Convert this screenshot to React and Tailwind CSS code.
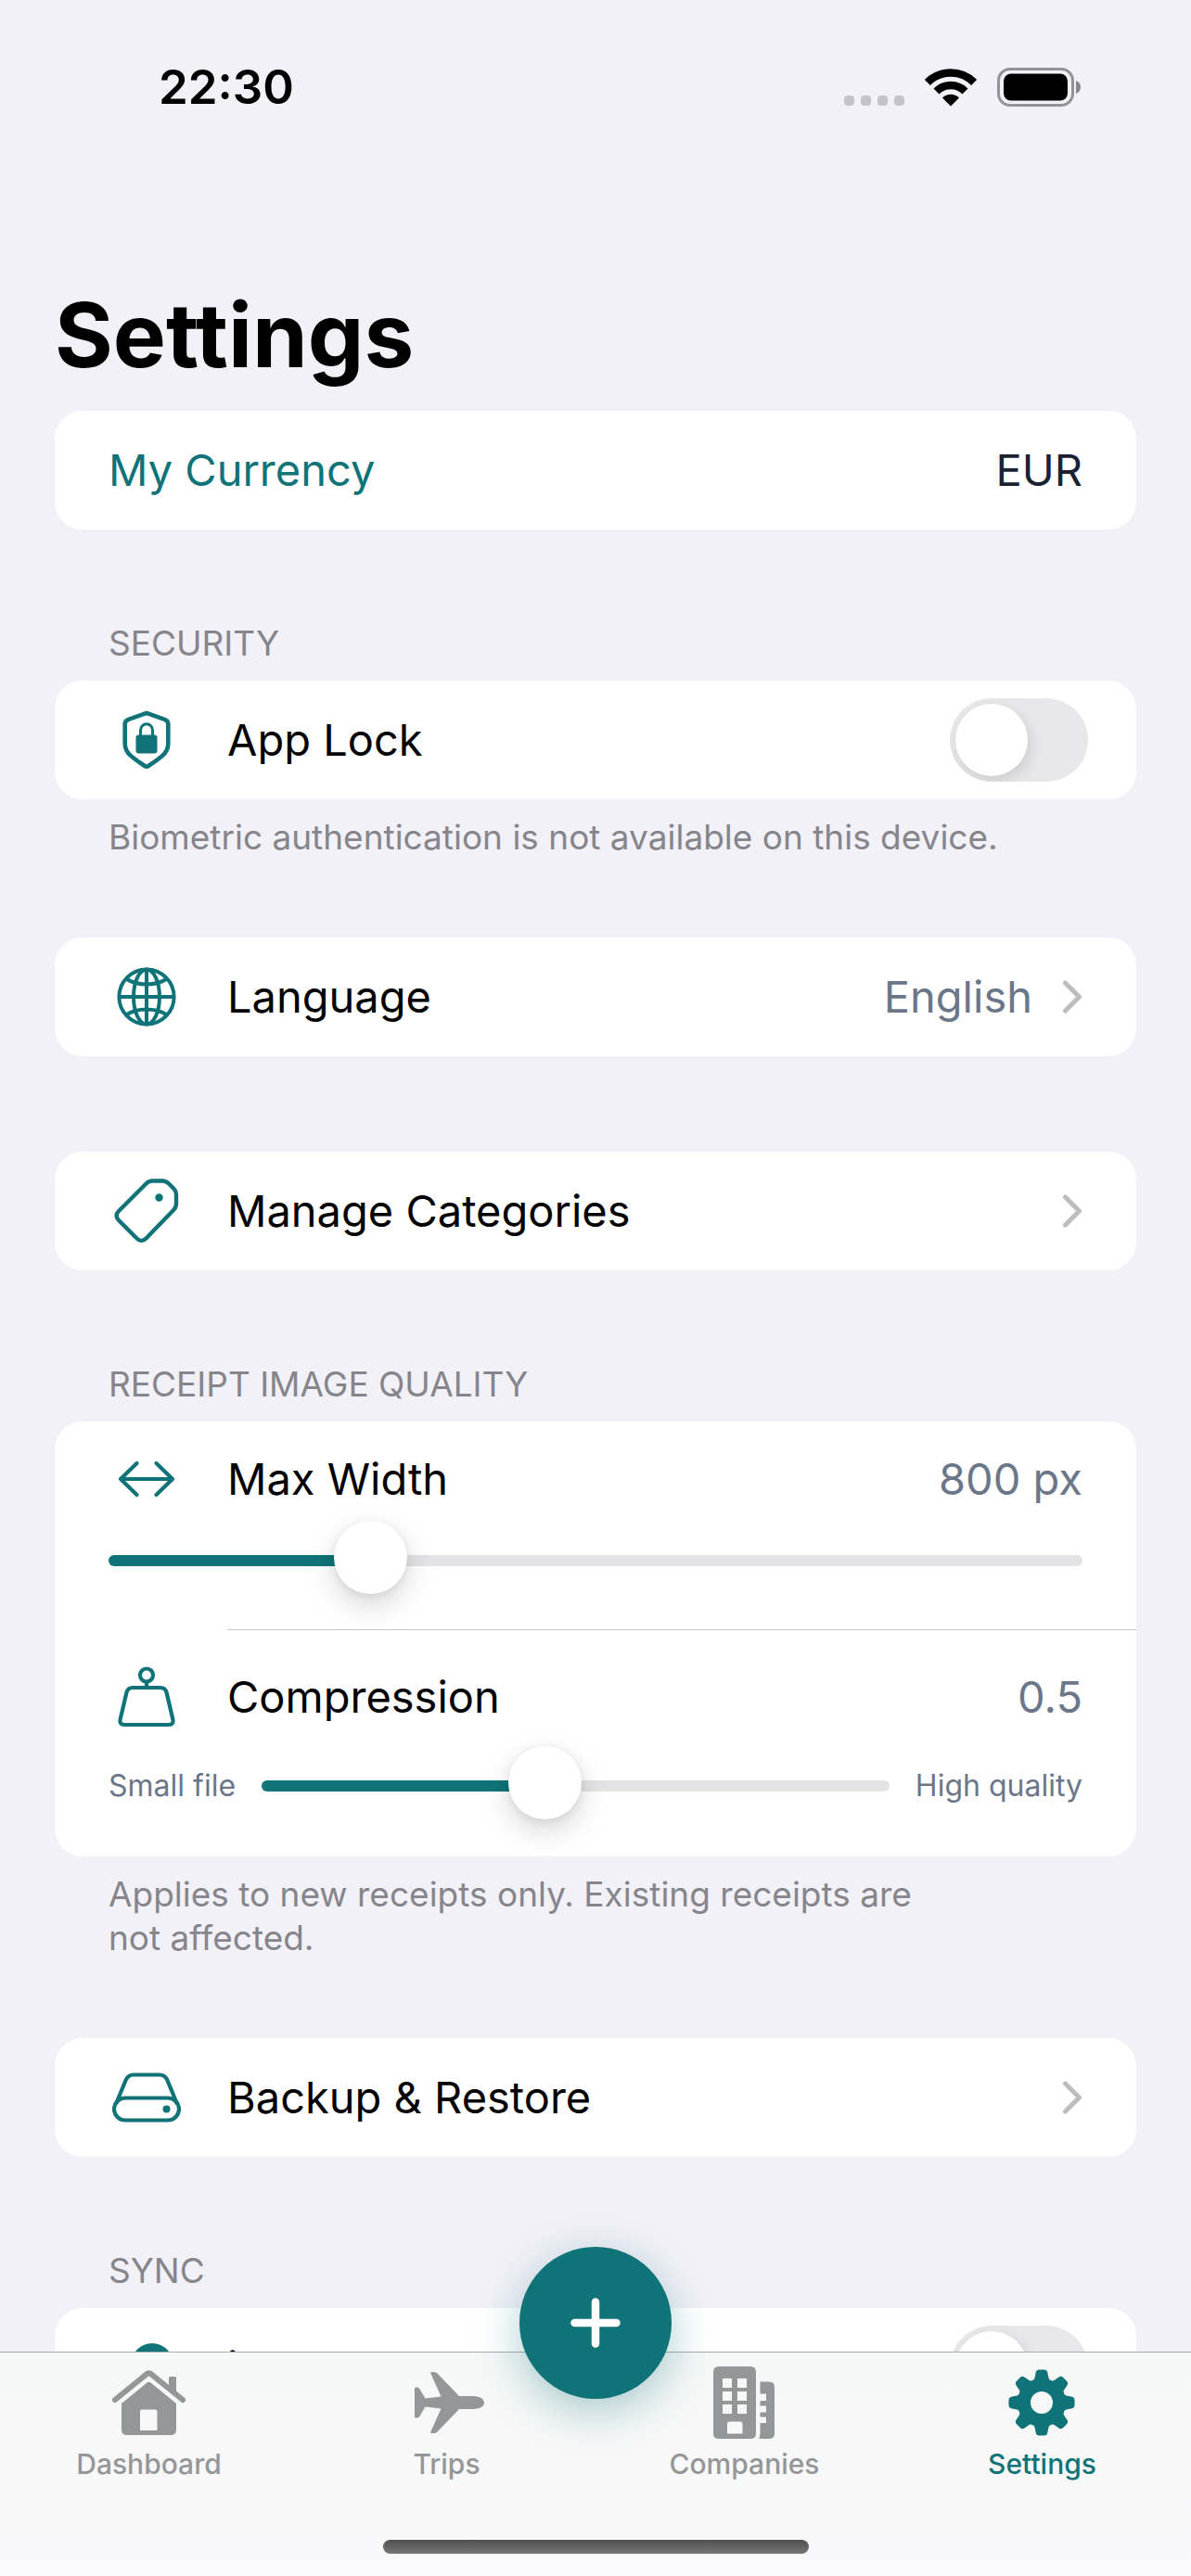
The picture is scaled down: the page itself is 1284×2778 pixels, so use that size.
import React, { useState } from "react";

const ShieldLockIcon = () => (
  <svg width="52" height="64" viewBox="0 0 52 64" fill="none">
    <path
      d="M24 3.6 Q26 2.6 28 3.6 L45.5 9.8 Q49.3 11.2 49.3 15 V36 Q49.3 44 42.5 49.5 Q36.5 54.5 28 60 Q26 61.3 24 60 Q15.5 54.5 9.5 49.5 Q2.7 44 2.7 36 V15 Q2.7 11.2 6.5 9.8 Z"
      stroke="currentColor"
      strokeWidth="4.6"
      strokeLinejoin="round"
    />
    <rect x="14.5" y="26.5" width="23" height="20" rx="3" fill="currentColor" />
    <path d="M19.5 28 V21.5 A6.5 6.8 0 0 1 32.5 21.5 V28" stroke="currentColor" strokeWidth="3" />
  </svg>
);

const GlobeIcon = () => (
  <svg width="64" height="64" viewBox="0 0 64 64" fill="none" stroke="currentColor" strokeWidth="4">
    <circle cx="32" cy="32" r="29.6" />
    <ellipse cx="32" cy="32" rx="14" ry="29.6" />
    <path d="M32 2 V62 M2 32 H62 M10 12.5 Q19 18.5 32 18.5 T54 12.5 M10 51.5 Q19 45.5 32 45.5 T54 51.5" />
  </svg>
);

const TagIcon = () => (
  <svg width="70" height="70" viewBox="0 0 70 70" fill="none">
    <path
      d="M41 2.5 H52 Q56 2.5 59 5.5 L64 10.5 Q67 13.5 67 17.5 V27 Q67 31 64 34 L34.5 64.5 Q29.5 69.5 24.5 64.5 L5 45 Q0 40 5 35 L34.5 5.5 Q37.5 2.5 41 2.5 Z"
      stroke="currentColor"
      strokeWidth="4.4"
      strokeLinejoin="round"
    />
    <circle cx="48.5" cy="20.5" r="4.2" fill="currentColor" />
  </svg>
);

const ArrowsIcon = () => (
  <svg width="62" height="40" viewBox="0 0 62 40" fill="none" stroke="currentColor" strokeWidth="4.2" strokeLinecap="round" strokeLinejoin="round">
    <path d="M3 20 H59 M20.5 3 L3 20 L20.5 37 M41.5 3 L59 20 L41.5 37" />
  </svg>
);

const WeightIcon = () => (
  <svg width="62" height="66" viewBox="0 0 62 66" fill="none" stroke="currentColor" strokeWidth="4.2">
    <circle cx="31" cy="9.5" r="7" />
    <path d="M31 16.5 V23" />
    <path d="M16 23 H46 Q51 23 52.5 28 L59.3 57 Q60.5 63 55 63 H7 Q1.5 63 2.7 57 L9.5 28 Q11 23 16 23 Z" strokeLinejoin="round" />
  </svg>
);

const DriveIcon = () => (
  <svg width="74" height="54" viewBox="0 0 74 54" fill="none">
    <path d="M14 27.5 H60 A11.8 11.8 0 0 1 60 51.5 H14 A11.8 11.8 0 0 1 14 27.5 Z" stroke="currentColor" strokeWidth="4.2" />
    <path d="M4 34 L14.5 8.5 Q17 2.5 23 2.5 H51 Q57 2.5 59.5 8.5 L70 34" stroke="currentColor" strokeWidth="4.2" />
    <circle cx="58.5" cy="39.5" r="4" fill="currentColor" />
  </svg>
);

const CloudIcon = () => (
  <svg width="78" height="52" viewBox="0 0 78 52" fill="currentColor">
    <circle cx="45" cy="22.5" r="22.5" />
    <circle cx="16" cy="36" r="16" />
    <circle cx="62" cy="36" r="16" />
    <rect x="16" y="28" width="46" height="24" />
  </svg>
);

const ChevronIcon = () => (
  <svg width="22" height="36" viewBox="0 0 22 36" fill="none" className="text-[#bdbdbf]">
    <path d="M3.5 3 L18.5 18 L3.5 33" stroke="currentColor" strokeWidth="5" strokeLinecap="round" strokeLinejoin="round" />
  </svg>
);

const WifiIcon = () => (
  <svg width="56" height="41" viewBox="0 0 56 41" fill="none" stroke="#000">
    <path d="M2.9 14.9 A35.5 35.5 0 0 1 53.1 14.9" strokeWidth="8.5" />
    <path d="M12.5 24.5 A22 22 0 0 1 43.5 24.5" strokeWidth="8.5" />
    <path d="M28 40.5 L19 31.5 A12.7 12.7 0 0 1 37 31.5 Z" fill="#000" stroke="none" />
  </svg>
);

const BatteryIcon = () => (
  <svg width="92" height="42" viewBox="0 0 92 42" fill="none">
    <rect x="1.5" y="1.5" width="80" height="39" rx="12.5" stroke="#949398" strokeWidth="3" />
    <rect x="7" y="6.5" width="69" height="29" rx="8" fill="#000" />
    <path d="M85 14 Q90 16 90 21 Q90 26 85 28 Z" fill="#87868b" />
  </svg>
);

const HouseIcon = () => (
  <svg width="80" height="78" viewBox="0 -4 80 78" fill="currentColor">
    <path d="M61 8.5 Q61 7 62.5 7 H67.5 Q69 7 69 8.5 V28 L61 21 Z" />
    <path d="M3 32 L37.5 3.9 Q39.5 2.5 41.5 3.9 L76 32" fill="none" stroke="currentColor" strokeWidth="6" strokeLinecap="round" />
    <path
      fillRule="evenodd"
      d="M10 36 L37.5 13.5 Q39.5 12 41.5 13.5 L69 36 V64 Q69 70 63 70 H16 Q10 70 10 64 Z M32 42.5 Q30 42.5 30 44.5 V65 H48.5 V44.5 Q48.5 42.5 46.5 42.5 Z"
    />
  </svg>
);

const PlaneIcon = () => (
  <svg width="82" height="78" viewBox="-6 -6 82 78" fill="currentColor">
    <path d="M48 26 L64 26 Q75 27 75 33 Q75 39 64 40 L48 40 L24.5 64.5 Q23 66 21 66 H18.5 Q16.5 66 17.5 64 L28.5 39.5 L11.5 37.5 L5.5 47.5 Q4.5 49.5 2.5 49.5 H1.5 Q0 49.5 0 48 V18 Q0 16.5 1.5 16.5 H2.5 Q4.5 16.5 5.5 18.5 L11.5 28.5 L28.5 26.5 L17.5 2 Q16.5 0 18.5 0 H21 Q23 0 24.5 1.5 Z" />
  </svg>
);

const BuildingsIcon = () => (
  <svg width="68" height="78" viewBox="0 0 68 78" fill="currentColor">
    <path
      fillRule="evenodd"
      d="M6 0 H40 Q46 0 46 6 V72 Q46 78 40 78 H6 Q0 78 0 72 V6 Q0 0 6 0 Z M10 13 H20 V23 H10 Z M26 13 H36 V23 H26 Z M10 27 H20 V37 H10 Z M26 27 H36 V37 H26 Z M10 41 H20 V51 H10 Z M26 41 H36 V51 H26 Z M17.5 59.5 Q15 59.5 15 62 V72.5 H31.5 V62 Q31.5 59.5 29 59.5 Z"
    />
    <path d="M50.5 16.5 H60 Q66 16.5 66 22.5 V72 Q66 78 60 78 H49 Q50.5 76 50.5 72 V61 H57 V54.5 H50.5 V49.5 H57 V42.5 H50.5 V37 H57 V29.5 H50.5 Z" />
  </svg>
);

const GearIcon = () => (
  <svg width="74" height="78" viewBox="0 -3 74 78" fill="currentColor">
    <circle cx="36" cy="36" r="19" fill="none" stroke="currentColor" strokeWidth="14" />
    {[0, 45, 90, 135, 180, 225, 270, 315].map((angle) => (
      <path
        key={angle}
        d="M25 13 Q28 12 28.5 9.5 L29.8 3 Q30.5 0.5 33 0.5 H39 Q41.5 0.5 42.2 3 L43.5 9.5 Q44 12 47 13 Z"
        transform={`rotate(${angle} 36 36)`}
      />
    ))}
  </svg>
);

const tabs = [
  { label: "Dashboard", icon: <HouseIcon /> },
  { label: "Trips", icon: <PlaneIcon /> },
  { label: "Companies", icon: <BuildingsIcon /> },
  { label: "Settings", icon: <GearIcon />, active: true },
];

const Section = ({ title, footer, children }) => (
  <section>
    {title && <h2 className="mb-[17px] px-[58px] text-[37px] leading-[47px] text-[#85858b]">{title}</h2>}
    <div className="rounded-[30px] bg-white">{children}</div>
    {footer && <p className="mt-[17px] px-[58px] text-[37px] leading-[47px] text-[#85858b]">{footer}</p>}
  </section>
);

const RowIcon = ({ children }) => (
  <span className="flex w-[81px] shrink-0 justify-center text-[#0f7377]">{children}</span>
);

const LinkRow = ({ icon, label, value }) => (
  <button type="button" className="flex h-32 w-full items-center gap-[47px] px-[58px] text-left">
    <RowIcon>{icon}</RowIcon>
    <span className="flex-1">{label}</span>
    <span className="flex items-center gap-8 text-[#6b7789]">
      {value}
      <ChevronIcon />
    </span>
  </button>
);

const ToggleRow = ({ icon, label }) => {
  const [on, setOn] = useState(false);

  return (
    <label className="flex h-32 items-center gap-[47px] pr-[52px] pl-[58px]">
      <RowIcon>{icon}</RowIcon>
      <span className="flex-1">{label}</span>
      <input
        type="checkbox"
        role="switch"
        checked={on}
        onChange={(e) => setOn(e.target.checked)}
        className="h-[90px] w-[149px] appearance-none overflow-hidden rounded-full bg-[#e8e8ea] p-[6px] before:block before:size-[78px] before:rounded-full before:bg-white before:shadow-[3px_6px_16px_rgba(0,0,0,0.12)] checked:bg-[#0f7377] checked:before:ml-auto"
      />
    </label>
  );
};

const Slider = ({ label, value, min, max, step, onChange }) => {
  const fill = ((value - min) / (max - min)) * 100;

  return (
    <input
      type="range"
      aria-label={label}
      value={value}
      min={min}
      max={max}
      step={step}
      onChange={(e) => onChange(Number(e.target.value))}
      style={{ "--track": `linear-gradient(to right, #0f7377 ${fill}%, #e3e3e5 ${fill}%)` }}
      className="h-[84px] min-w-0 flex-1 appearance-none bg-transparent [&::-webkit-slider-runnable-track]:h-3 [&::-webkit-slider-runnable-track]:rounded-full [&::-webkit-slider-runnable-track]:[background:var(--track)] [&::-webkit-slider-thumb]:-mt-[37px] [&::-webkit-slider-thumb]:size-[79px] [&::-webkit-slider-thumb]:appearance-none [&::-webkit-slider-thumb]:rounded-full [&::-webkit-slider-thumb]:bg-white [&::-webkit-slider-thumb]:shadow-[0_12px_32px_rgba(0,0,0,0.16),0_2px_10px_rgba(0,0,0,0.08)]"
    />
  );
};

const StatusBar = () => (
  <header className="flex h-[188px] shrink-0 items-center justify-between pr-[117px] pl-[171px]">
    <span className="text-[51px] font-semibold text-black">22:30</span>
    <div className="flex items-center gap-[22px]">
      <div className="flex gap-[7px] self-end pb-px">
        {[0, 1, 2, 3].map((dot) => (
          <span key={dot} className="size-[11px] rounded-[4px] bg-[#c4c3c9]" />
        ))}
      </div>
      <WifiIcon />
      <BatteryIcon />
    </div>
  </header>
);

export default function App() {
  const [maxWidth, setMaxWidth] = useState(800);
  const [compression, setCompression] = useState(0.5);

  return (
    <div className="flex h-screen flex-col bg-[#f2f1f7] font-['Inter','Liberation_Sans',sans-serif] text-[47px] leading-[60px] text-black">
      <StatusBar />

      <main className="min-h-0 flex-1 overflow-y-auto px-[59px] [scrollbar-width:none]">
        <h1 className="mt-[113px] mb-[22px] text-[96px] leading-[120px] font-bold">Settings</h1>

        <Section>
          <button type="button" className="flex h-32 w-full items-center justify-between px-[58px]">
            <span className="text-[#0f7377]">My Currency</span>
            <span className="text-[#1a2130]">EUR</span>
          </button>
        </Section>

        <div className="mt-[99px]">
          <Section title="SECURITY" footer="Biometric authentication is not available on this device.">
            <ToggleRow icon={<ShieldLockIcon />} label="App Lock" />
          </Section>
        </div>

        <div className="mt-[85px] mb-[103px]">
          <Section>
            <LinkRow icon={<GlobeIcon />} label="Language" value="English" />
          </Section>
        </div>

        <Section>
          <LinkRow icon={<TagIcon />} label="Manage Categories" />
        </Section>

        <div className="mt-[99px]">
          <Section
            title="RECEIPT IMAGE QUALITY"
            footer={
              <>
                Applies to new receipts only. Existing receipts are
                <br />
                not affected.
              </>
            }
          >
            <div className="px-[58px] py-8">
              <div className="flex h-[60px] items-center gap-[47px]">
                <RowIcon>
                  <ArrowsIcon />
                </RowIcon>
                <span className="flex-1">Max Width</span>
                <span className="text-[#6b7789]">{maxWidth} px</span>
              </div>
              <div className="mt-4 flex">
                <Slider label="Max Width" value={maxWidth} min={400} max={2000} step={100} onChange={setMaxWidth} />
              </div>
            </div>
            <div className="ml-[186px] border-t border-[#c6c6c8]" />
            <div className="px-[58px] pt-[42px] pb-[34px]">
              <div className="flex h-[60px] items-center gap-[47px]">
                <RowIcon>
                  <WeightIcon />
                </RowIcon>
                <span className="flex-1">Compression</span>
                <span className="text-[#6b7789]">{compression}</span>
              </div>
              <div className="mt-6 flex items-center gap-7 text-[32px] text-[#6b7789]">
                <span>Small file</span>
                <Slider label="Compression" value={compression} min={0.1} max={1} step={0.1} onChange={setCompression} />
                <span>High quality</span>
              </div>
            </div>
          </Section>
        </div>

        <div className="mt-[85px] mb-[99px]">
          <Section>
            <LinkRow icon={<DriveIcon />} label="Backup & Restore" />
          </Section>
        </div>

        <Section title="SYNC">
          <ToggleRow icon={<CloudIcon />} label="iCloud Sync" />
        </Section>
      </main>

      <nav className="relative shrink-0 border-t border-[#a9a9ac] bg-linear-to-b from-[#f6f7f7] to-[#f9f9fb]">
        <div className="grid grid-cols-4 pt-[15px]">
          {tabs.map((tab) => (
            <a
              key={tab.label}
              href="#"
              aria-current={tab.active ? "page" : undefined}
              className="flex flex-col items-center gap-[9px] text-[30px] leading-[36px] font-medium text-[#959697] aria-[current=page]:text-[#0f7377]"
            >
              {tab.icon}
              {tab.label}
            </a>
          ))}
        </div>
        <div className="mx-auto mt-16 mb-6 h-[15px] w-[459px] rounded-full bg-linear-to-b from-[#505050] to-[#777777]" />

        <button
          type="button"
          aria-label="Add"
          className="absolute -top-[114px] left-1/2 flex size-[164px] -translate-x-1/2 items-center justify-center rounded-full bg-[#0f7377] shadow-[0_12px_48px_rgba(15,115,119,0.35)]"
        >
          <svg width="54" height="54" viewBox="0 0 54 54" stroke="#fff" strokeWidth="8.5" strokeLinecap="round">
            <path d="M27 4.5 V49.5 M4.5 27 H49.5" />
          </svg>
        </button>
      </nav>
    </div>
  );
}
